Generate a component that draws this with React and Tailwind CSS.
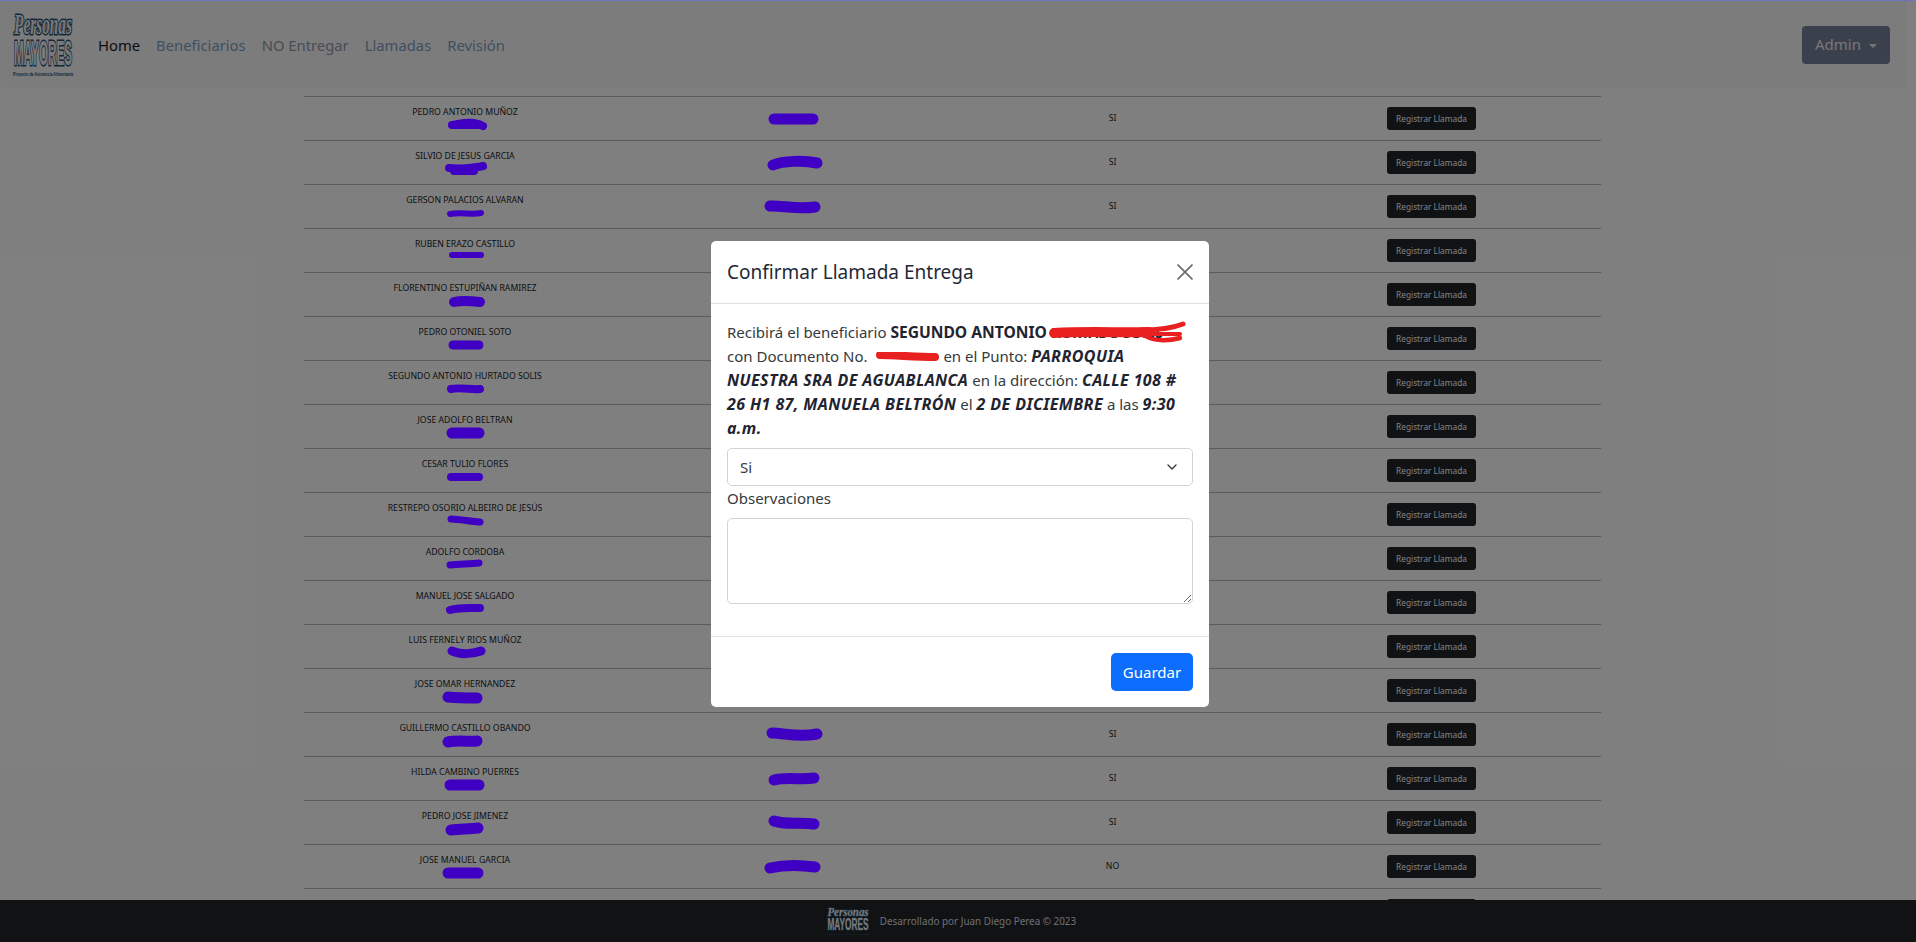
import { ChevronDown } from 'lucide-react';

const rows = [
    { name: 'PEDRO ANTONIO MUÑOZ', ans: 'SI', id: 'M22 8 C30 7 42 3 53 9 M22 8 H50', idw: 8, doc: 'M13 8 H52' },
    { name: 'SILVIO DE JESUS GARCIA', ans: 'SI', id: 'M19 7 C28 8 44 7 53 5 M24 10 H44', idw: 8, doc: 'M12 10 C22 6 42 5 56 8' },
    { name: 'GERSON PALACIOS ALVARAN', ans: 'SI', id: 'M20 9 C30 7 42 10 51 8', idw: 6, doc: 'M9 7 C20 6 35 11 54 8' },
    { name: 'RUBEN ERAZO CASTILLO', ans: 'SI', id: 'M22 6 H51', idw: 6 },
    { name: 'FLORENTINO ESTUPIÑAN RAMIREZ', ans: 'SI', id: 'M24 9 C32 7 42 8 50 9', idw: 10 },
    { name: 'PEDRO OTONIEL SOTO', ans: 'SI', id: 'M23 8 H49', idw: 9 },
    { name: 'SEGUNDO ANTONIO HURTADO SOLIS', ans: 'SI', id: 'M21 8 C30 6 42 9 50 8', idw: 8 },
    { name: 'JOSE ADOLFO BELTRAN', ans: 'SI', id: 'M22 8 H49', idw: 11 },
    { name: 'CESAR TULIO FLORES', ans: 'SI', id: 'M21 8 H49', idw: 8 },
    { name: 'RESTREPO OSORIO ALBEIRO DE JESÚS', ans: 'SI', id: 'M21 6 C30 6 42 9 50 9', idw: 7 },
    { name: 'ADOLFO CORDOBA', ans: 'SI', id: 'M20 8 C30 7 40 7 49 6', idw: 7 },
    { name: 'MANUEL JOSE SALGADO', ans: 'SI', id: 'M20 9 C30 6 40 7 50 7', idw: 8 },
    { name: 'LUIS FERNELY RIOS MUÑOZ', ans: 'SI', id: 'M22 6 C30 10 42 9 51 6', idw: 9 },
    { name: 'JOSE OMAR HERNANDEZ', ans: 'SI', id: 'M18 8 C28 9 40 9 47 9', idw: 11 },
    { name: 'GUILLERMO CASTILLO OBANDO', ans: 'SI', id: 'M18 9 C28 7 40 9 47 8', idw: 11, doc: 'M11 6 C24 6 36 11 56 7' },
    { name: 'HILDA CAMBINO PUERRES', ans: 'SI', id: 'M20 8 H49', idw: 11, doc: 'M13 9 C24 6 40 9 53 7' },
    { name: 'PEDRO JOSE JIMENEZ', ans: 'SI', id: 'M21 9 C30 8 40 8 48 7', idw: 11, doc: 'M13 6 C24 10 40 7 53 9' },
    { name: 'JOSE MANUEL GARCIA', ans: 'NO', id: 'M18 8 H48', idw: 11, doc: 'M9 9 C22 6 40 6 54 8' },
    { name: '', ans: '' },
];

function Logo({ className }) {
    return (
        <svg viewBox="0 0 62 66" preserveAspectRatio="none" className={className}>
            <text x="31" y="22" textAnchor="middle" textLength="58" lengthAdjust="spacingAndGlyphs" fontFamily="'Liberation Serif', serif" fontStyle="italic" fontWeight="700" fontSize="29" fill="#eef2f5" stroke="#2c4f70" strokeWidth="3" paintOrder="stroke">Personas</text>
            <text x="31" y="53" textAnchor="middle" textLength="58" lengthAdjust="spacingAndGlyphs" fontFamily="'Liberation Sans', sans-serif" fontWeight="700" fontSize="35" fill="#eef2f5" stroke="#2c4f70" strokeWidth="3.2" paintOrder="stroke">MAYORES</text>
            <text x="31" y="64" textAnchor="middle" textLength="60" lengthAdjust="spacingAndGlyphs" fontFamily="'Liberation Sans', sans-serif" fontWeight="700" fontSize="5.5" fill="#2c4f70">Proyecto de Asistencia Alimentaria</text>
        </svg>
    );
}

// marker strokes sit above the backdrop, the screenshot was painted on afterwards
function Scribble({ d, width, w }) {
    return (
        <svg width={w} height="16" viewBox={`0 0 ${w} 16`} className="relative z-20 block">
            <path d={d} fill="none" stroke="#3f00c4" strokeWidth={width} strokeLinecap="round" strokeLinejoin="round" />
        </svg>
    );
}

function Strong({ children }) {
    return <b className="text-[16px] leading-none tracking-[0.4px] text-[#1f2430] italic">{children}</b>;
}

function Row({ row }) {
    return (
        <div className="grid h-[44px] grid-cols-[323px_332px_308px_334px] border-t border-[#b8b8b8] text-[8.7px] text-[#212529]">
            <div className="flex flex-col items-center pt-[9px]">
                <span className="h-[13px] leading-[13px] whitespace-nowrap">{row.name}</span>
                <div className="-mt-[2px]">{row.id && <Scribble d={row.id} width={row.idw} w={70} />}</div>
            </div>
            <div className="flex items-center justify-center">{row.doc && <Scribble d={row.doc} width={11} w={64} />}</div>
            <div className="flex items-center justify-center pt-[1px]">{row.ans}</div>
            <div className="flex items-center justify-center pr-[4px]">
                <button className="h-[23px] w-[89px] rounded-[3px] bg-[#212529] pt-[1px] text-[8.3px] text-white">Registrar Llamada</button>
            </div>
        </div>
    );
}

export default function App() {
    return (
        <div className="relative flex h-screen flex-col overflow-hidden bg-white font-['Noto_Sans',sans-serif]">
            <nav className="mt-[1px] flex h-[87px] w-[1906px] shrink-0 items-center rounded-b-md bg-[#f8f9fa] pl-[12px] pr-[16px]">
                <Logo className="h-[66px] w-[62px] overflow-visible" />
                <div className="ml-[24px] flex gap-[16px] pt-[1px] text-[14.8px] text-[#7f9fbf]">
                    <a className="text-[#1a1a1a]">Home</a>
                    <a>Beneficiarios</a>
                    <a className="text-[#8f9aa6]">NO Entregar</a>
                    <a>Llamadas</a>
                    <a>Revisión</a>
                </div>
                <button className="ml-auto flex h-[38px] w-[88px] items-center justify-center gap-[8px] rounded-[4px] bg-[#76809a] text-[15px] text-[#ececec]">
                    Admin
                    <span className="mt-[2px] border-x-[4px] border-t-[4px] border-x-transparent border-t-[#ececec]"></span>
                </button>
            </nav>

            <main className="min-h-0 flex-1 overflow-hidden pr-[12px] pt-[8px]">
                <div className="mx-auto w-[1297px]">
                    {rows.map((row, i) => <Row key={i} row={row} />)}
                </div>
            </main>

            <footer className="flex h-[42px] shrink-0 items-center justify-center gap-[10px] bg-[#212529] pr-[14px] text-[9.9px] text-[#dcdee0]">
                <Logo className="h-[30px] w-[44px] overflow-visible" />
                <span>Desarrollado por Juan Diego Perea © 2023</span>
            </footer>

            {/* backdrop + modal */}
            <div className="absolute inset-0 z-10 bg-black/50 pl-[711px] pt-[241px]">
                <div className="w-[498px] rounded-[5px] bg-white text-[#343a40]">
                    <div className="flex h-[63px] items-center justify-between border-b border-[#dee2e6] px-[16px]">
                        <h5 className="text-[19px] text-[#1f2937]">Confirmar Llamada Entrega</h5>
                        <svg width="16" height="16" viewBox="0 0 16 16">
                            <path d="M0.5 0.5 L15.5 15.5 M15.5 0.5 L0.5 15.5" stroke="#6b6b6b" strokeWidth="1.6" fill="none" />
                        </svg>
                    </div>
                    <div className="p-[16px] text-[15px] leading-[24px]">
                        <p className="h-[120px] whitespace-nowrap">
                            Recibirá el beneficiario <b className="text-[15.6px] leading-none text-[#1f2430]">SEGUNDO ANTONIO </b>
                            <span className="relative">
                                <b className="text-[14px] leading-none text-[#1f2430]">HURTADO SOLIS</b>
                                <svg width="136" height="24" viewBox="0 0 136 24" className="absolute -top-[1px] left-0 overflow-visible">
                                    <path d="M3 12 C40 10 70 12 98 11" fill="none" stroke="#e8201f" strokeWidth="10" strokeLinecap="round" />
                                    <path d="M90 9 C110 9 122 7 132 3" fill="none" stroke="#e8201f" strokeWidth="5" strokeLinecap="round" />
                                    <path d="M92 13 C100 21 118 20 129 17" fill="none" stroke="#e8201f" strokeWidth="4.5" strokeLinecap="round" />
                                    <path d="M102 13 H129" fill="none" stroke="#e8201f" strokeWidth="4" strokeLinecap="round" />
                                </svg>
                            </span>
                            <br />
                            con Documento No. <span className="relative inline-block h-[10px] w-[68px]">
                                <svg width="68" height="14" viewBox="0 0 68 14" className="absolute left-0 top-0">
                                    <path d="M9 3 C24 3 44 5 64 5" fill="none" stroke="#e8201f" strokeWidth="8" strokeLinecap="round" />
                                </svg>
                            </span> en el Punto: <Strong>PARROQUIA</Strong>
                            <br />
                            <Strong>NUESTRA SRA DE AGUABLANCA</Strong> en la dirección: <Strong>CALLE 108 #</Strong>
                            <br />
                            <Strong>26 H1 87, MANUELA BELTRÓN</Strong> el <Strong>2 DE DICIEMBRE</Strong> a las <Strong>9:30</Strong>
                            <br />
                            <Strong>a.m.</Strong>
                        </p>
                        <div className="mt-[8px] flex h-[38px] items-center justify-between rounded-[5px] border border-[#ced4da] px-[12px]">
                            <span>Si</span>
                            <ChevronDown size={16} strokeWidth={2} />
                        </div>
                        <label className="block">Observaciones</label>
                        <textarea className="mb-[16px] mt-[8px] block h-[86px] w-full rounded-[5px] border border-[#ced4da]"></textarea>
                    </div>
                    <div className="flex justify-end border-t border-[#dee2e6] p-[16px]">
                        <button className="h-[38px] w-[82px] rounded-[5px] bg-[#0d6efd] text-[15px] text-white">Guardar</button>
                    </div>
                </div>
            </div>
            <div className="absolute inset-x-0 top-0 z-20 h-[1px] bg-[#7070c0]"></div>
        </div>
    );
}
